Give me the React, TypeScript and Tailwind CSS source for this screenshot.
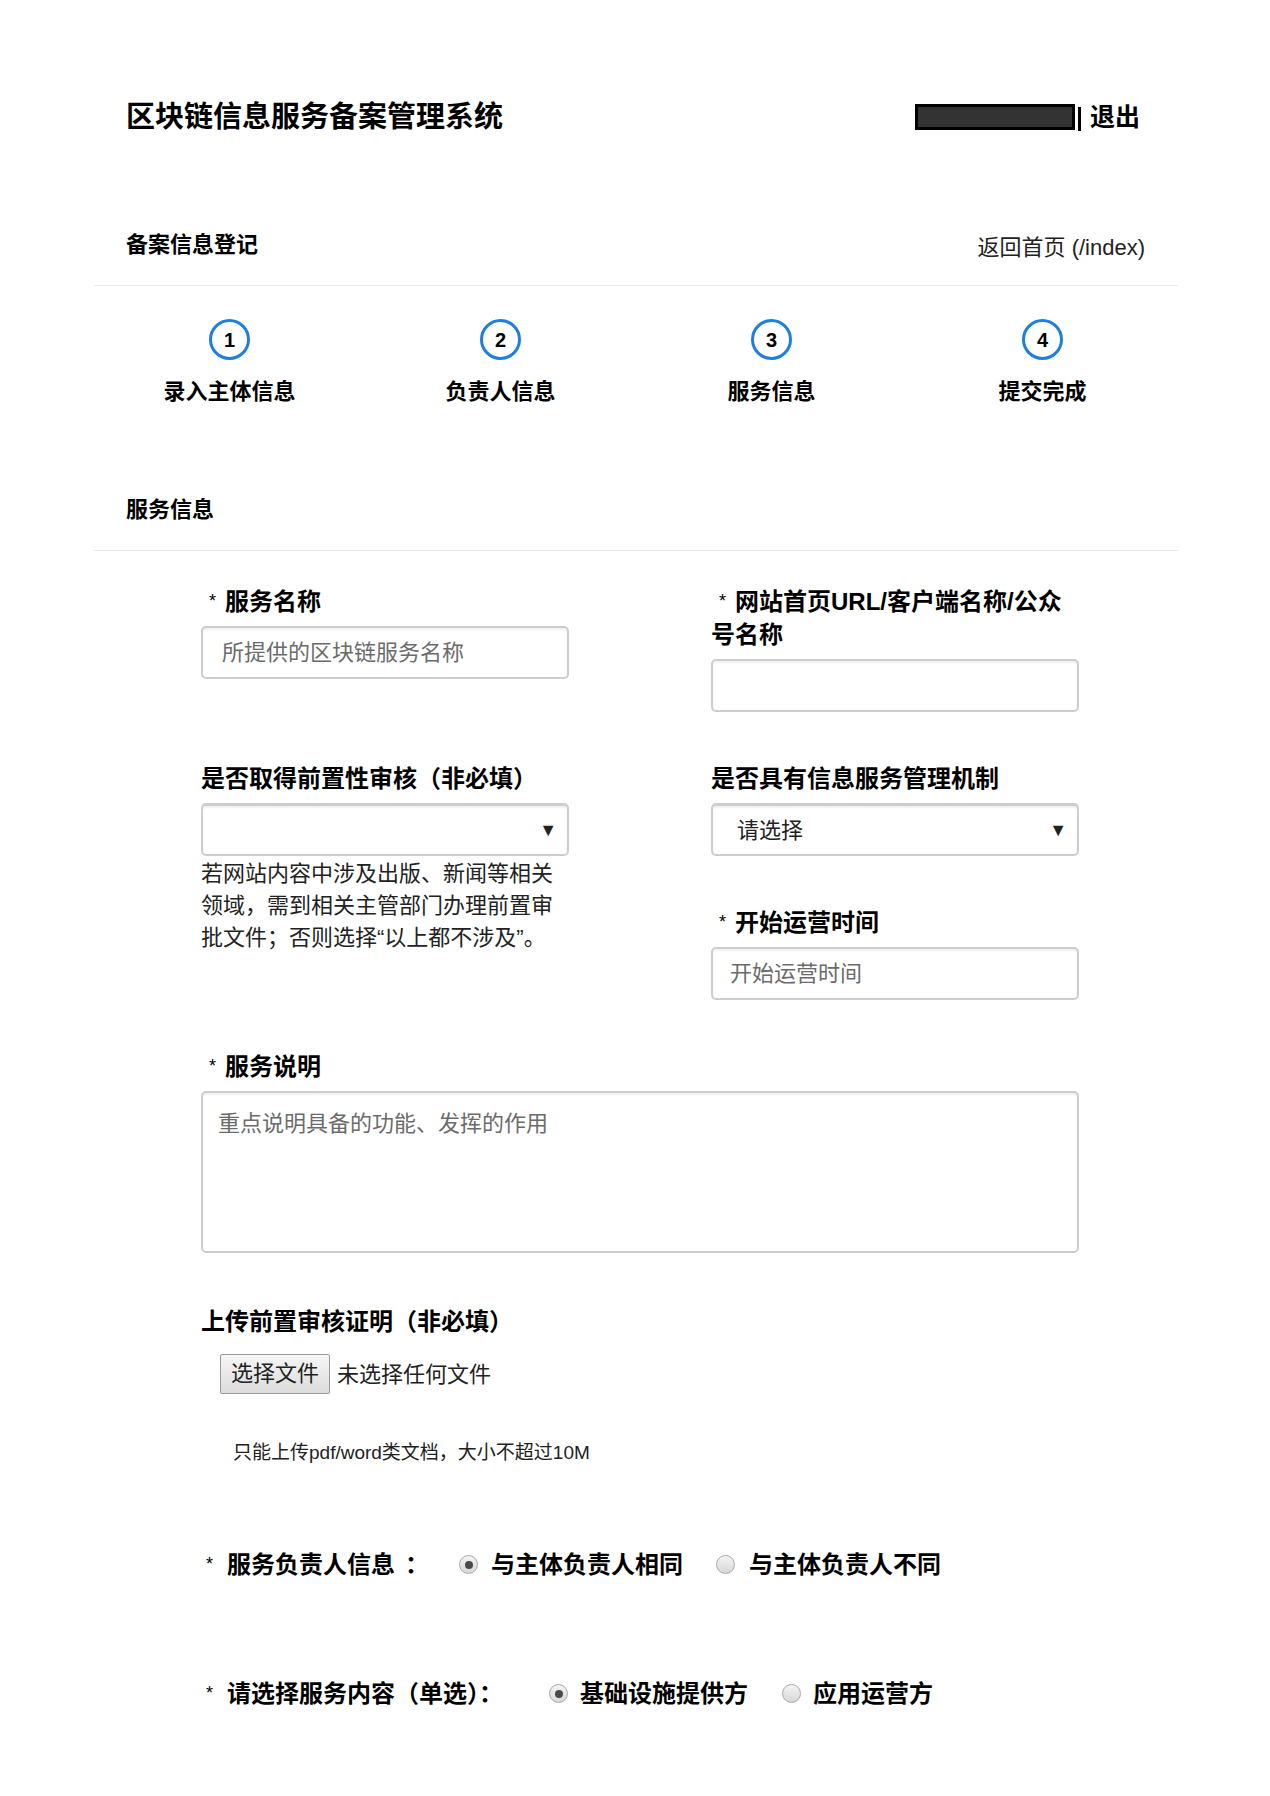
import React from "react";

const steps = [
  { n: 1, label: "录入主体信息" },
  { n: 2, label: "负责人信息" },
  { n: 3, label: "服务信息" },
  { n: 4, label: "提交完成" },
];

const Label = ({ children, star, className = "" }: { children: React.ReactNode; star?: boolean; className?: string }) => (
  <div className={`text-[24px] font-bold leading-[33px] mb-2 ${className}`}>
    {star && <span className="ml-2 mr-[9px] text-[18px] font-normal align-top">*</span>}
    {children}
  </div>
);

const inputCls =
  "w-full h-[53px] border-2 border-[#cdcdcd] rounded-[5px] text-[22px] text-[#333] placeholder:text-[#6b6b6b] outline-none shadow-[inset_0_2px_2px_rgba(0,0,0,0.06)]";

const FakeSelect = ({ value }: { value?: string }) => (
  <div className="w-full h-[53px] border-2 border-[#cdcdcd] border-t-[3px] rounded-[5px] flex items-center justify-between pl-[24px] pr-[10px] text-[22px] text-[#222] shadow-[inset_0_2px_2px_rgba(0,0,0,0.06)]">
    <span>{value}</span>
    <span className="text-[18px] leading-none">▼</span>
  </div>
);

const Radio = ({ checked }: { checked?: boolean }) => (
  <span className="inline-flex w-[19px] h-[19px] rounded-full border border-[#a9a9a9] bg-gradient-to-b from-[#f4f4f4] to-[#d8d8d8] items-center justify-center">
    {checked && <span className="w-[8px] h-[8px] rounded-full bg-[#4a4a4a]" />}
  </span>
);

export default function App() {
  return (
    <div className="min-h-[1796px] bg-white text-black font-['Liberation_Sans','Noto_Sans_CJK_SC',sans-serif]">
      <div className="ml-[94px] w-[1084px]">
        {/* Header */}
        <div className="pt-[99px] pl-8 pr-[38px] flex items-center justify-between h-[135px]">
          <h1 className="text-[29px] font-bold leading-9">区块链信息服务备案管理系统</h1>
          <div className="flex items-center">
            <div className="w-[160px] h-[26px] bg-[#333] border-[3px] border-black" />
            <span className="ml-[3px] w-[3px] h-[24px] bg-black mt-[4px]" />
            <span className="ml-[9px] text-[25px] font-bold leading-9">退出</span>
          </div>
        </div>

        {/* Sub header */}
        <div className="mt-[95px] pl-8 pr-[33px] pb-[25px] border-b border-[#e8e8e8] flex items-end justify-between">
          <span className="text-[22px] font-bold leading-[30px]">备案信息登记</span>
          <span className="text-[22px] leading-[30px] text-[#222] -mb-[3px]">返回首页 (/index)</span>
        </div>

        {/* Steps */}
        <div className="grid grid-cols-4 mt-[33px]">
          {steps.map((s) => (
            <div key={s.n} className="flex flex-col items-center">
              <div className="w-[41px] h-[41px] rounded-full border-[3px] border-[#1f7fdc] flex items-center justify-center text-[20px] font-bold leading-none">
                {s.n}
              </div>
              <div className="mt-[17px] text-[22px] font-bold leading-[30px]">{s.label}</div>
            </div>
          ))}
        </div>

        {/* Section */}
        <div className="mt-[88px] pl-8 pb-[25px] border-b border-[#e8e8e8] text-[22px] font-bold leading-[30px]">
          服务信息
        </div>

        <div className="ml-[107px] w-[878px] mt-[34px]">
          <div className="grid grid-cols-2 gap-x-[142px] gap-y-[50px]">
            <div>
              <Label star>服务名称</Label>
              <input className={`${inputCls} pl-[19px]`} placeholder="所提供的区块链服务名称" />
            </div>
            <div>
              <Label star className="max-w-[352px]">网站首页URL/客户端名称/公众号名称</Label>
              <input className={`${inputCls} pl-[19px]`} />
            </div>

            <div>
              <Label>是否取得前置性审核（非必填）</Label>
              <FakeSelect />
              <p className="mt-[2px] text-[22px] leading-[32px] text-[#222]">
                若网站内容中涉及出版、新闻等相关领域，需到相关主管部门办理前置审批文件；否则选择“以上都不涉及”。
              </p>
            </div>
            <div>
              <Label>是否具有信息服务管理机制</Label>
              <FakeSelect value="请选择" />
              <Label star className="mt-[50px]">开始运营时间</Label>
              <input className={`${inputCls} pl-[17px]`} placeholder="开始运营时间" />
            </div>

            <div className="col-span-2">
              <Label star>服务说明</Label>
              <textarea
                className="w-full h-[162px] border-2 border-[#cdcdcd] rounded-[5px] pl-[15px] pt-[16px] text-[22px] leading-[30px] placeholder:text-[#6b6b6b] outline-none resize-none shadow-[inset_0_2px_2px_rgba(0,0,0,0.06)]"
                placeholder="重点说明具备的功能、发挥的作用"
              />
            </div>

            <div className="col-span-2 -mt-[5px]">
              <Label>上传前置审核证明（非必填）</Label>
              <div className="mt-[16px] ml-[19px] flex items-center">
                <button className="h-[40px] px-[10px] border border-[#999] rounded-[2px] bg-gradient-to-b from-[#f6f6f6] to-[#dcdcdc] text-[22px] text-[#222] leading-none">
                  选择文件
                </button>
                <span className="ml-[7px] text-[22px] text-[#222]">未选择任何文件</span>
              </div>
              <p className="mt-[46px] ml-[32px] text-[19px] leading-[26px] text-[#222]">
                只能上传pdf/word类文档，大小不超过10M
              </p>
            </div>
          </div>

          {/* Radio rows */}
          <div className="mt-[82px] pl-[5px] flex items-center text-[24px] font-bold leading-[33px]">
            <span className="text-[18px] font-normal self-start">*</span>
            <span className="ml-[14px]">服务负责人信息</span>
            <span className="ml-[10px]">：</span>
            <span className="ml-[30px] flex items-center">
              <Radio checked />
              <span className="ml-[13px]">与主体负责人相同</span>
            </span>
            <span className="ml-[33px] flex items-center">
              <Radio />
              <span className="ml-[14px]">与主体负责人不同</span>
            </span>
          </div>

          <div className="mt-[96px] pl-[5px] flex items-center text-[24px] font-bold leading-[33px]">
            <span className="text-[18px] font-normal self-start">*</span>
            <span className="ml-[14px]">请选择服务内容（单选）：</span>
            <span className="ml-[46px] flex items-center">
              <Radio checked />
              <span className="ml-[12px]">基础设施提供方</span>
            </span>
            <span className="ml-[34px] flex items-center">
              <Radio />
              <span className="ml-[12px]">应用运营方</span>
            </span>
          </div>
        </div>
      </div>
    </div>
  );
}
